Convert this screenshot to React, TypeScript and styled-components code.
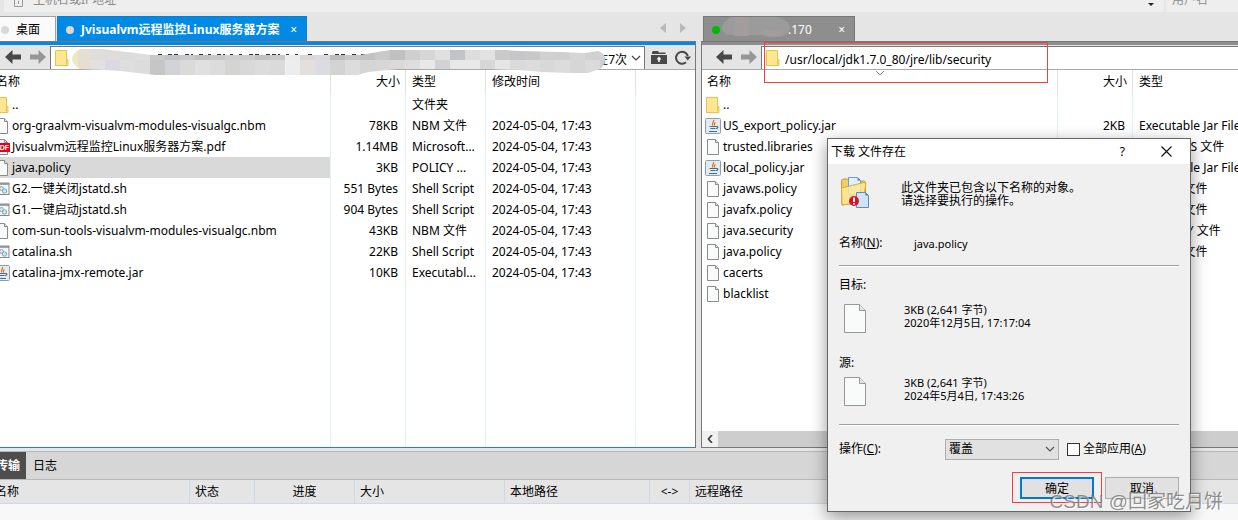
import React from 'react';
import styled, { createGlobalStyle } from 'styled-components';

const GlobalStyle = createGlobalStyle`
  *, *::before, *::after { box-sizing: border-box; }
  body {
    margin: 0;
    background: #e5e5e5;
    color: #000;
    font-family: 'Noto Sans', 'Noto Sans CJK SC', sans-serif;
    font-size: 12px;
    line-height: 18px;
    overflow: hidden;
  }
  button, input, select { font: inherit; color: inherit; }
  svg { display: block; flex: none; }
`;

const Desktop = styled.div`
  position: relative;
  height: 100vh;
  overflow: hidden;
`;

const Client = styled.div`
  display: flex;
  flex-direction: column;
  height: 100%;
  margin-left: -10px;
`;

const ConnectBar = styled.div`
  display: flex;
  height: 12px;
  padding-left: 14px;
  gap: 2px;
  overflow: hidden;
  color: #8c8c8c;
`;

const ConnectField = styled.label<{ $grow?: boolean }>`
  display: flex;
  flex: ${p => (p.$grow ? '1' : '0 0 72px')};
  min-width: 0;
  align-items: flex-end;
  gap: 10px;
  padding: 0 10px 5px ${p => (p.$grow ? '10px' : '6px')};
  background: #eee;
`;

const ConnectInput = styled.input`
  flex: 1;
  min-width: 0;
  height: 14px;
  padding: 0;
  border: 0;
  background: transparent;
  line-height: 14px;
  &::placeholder { color: #8c8c8c; opacity: 1; }
`;

const Panes = styled.main`
  display: grid;
  grid-template-columns: 706fr 537fr;
  gap: 5px;
  flex: 1;
  min-height: 0;
`;

const PaneBox = styled.section`
  display: flex;
  flex-direction: column;
  min-width: 0;
`;

const TabStrip = styled.div`
  display: flex;
  align-items: flex-end;
  gap: 1px;
  height: 29px;
  padding-left: 2px;
`;

const Tab = styled.button<{ $tone: 'idle' | 'blue' | 'gray' }>`
  display: flex;
  align-items: center;
  gap: 7px;
  height: 25px;
  padding: 2px 0 0 8px;
  border: 1px solid ${p => (p.$tone === 'blue' ? '#0b7fcf' : p.$tone === 'gray' ? '#777' : '#a0a0a0')};
  border-bottom: 0;
  background: ${p => (p.$tone === 'blue' ? '#008ae6' : p.$tone === 'gray' ? '#8e8e8e' : '#fafafa')};
  color: ${p => (p.$tone === 'idle' ? '#000' : '#fff')};
  font-weight: ${p => (p.$tone === 'blue' ? 700 : 400)};
  white-space: nowrap;
  width: ${p => (p.$tone === 'blue' ? '250px' : p.$tone === 'gray' ? '152px' : '64px')};
`;

const Dot = styled.span<{ $on?: boolean }>`
  width: 8px;
  height: 8px;
  border-radius: 50%;
  background: ${p => (p.$on ? '#00b80c' : '#d8d8d8')};
`;

const TabClose = styled.span`
  margin-left: auto;
  padding-right: 9px;
  font-weight: 400;
`;

const TabScroll = styled.div`
  display: flex;
  gap: 14px;
  margin: 0 10px 8px auto;
`;

const Frame = styled.div<{ $accent: string; $open?: boolean }>`
  display: flex;
  flex: 1;
  flex-direction: column;
  min-height: 0;
  border: 1px solid #777;
  border-right-width: ${p => (p.$open ? 0 : 1)}px;
  border-bottom-color: ${p => p.$accent};
`;

const AccentBar = styled.div<{ $accent: string }>`
  height: 3px;
  background: ${p => p.$accent};
`;

const Toolbar = styled.div`
  position: relative;
  display: flex;
  align-items: center;
  height: 25px;
  padding-left: 14px;
  border-bottom: 1px solid #aaa;
`;

const IconButton = styled.button<{ $gap?: number }>`
  padding: 0;
  margin: 0 ${p => p.$gap ?? 0}px 0 0;
  border: 0;
  background: transparent;
`;

const PathBox = styled.div<{ $open?: boolean }>`
  display: flex;
  flex: 1;
  min-width: 0;
  align-items: center;
  align-self: stretch;
  margin-top: 1px;
  padding-left: 3px;
  border: 1px solid #777;
  border-right-width: ${p => (p.$open ? 0 : 1)}px;
  border-bottom: 0;
  background: #fff;
`;

const PathInput = styled.input<{ $end?: boolean }>`
  flex: 1;
  min-width: 0;
  height: 20px;
  padding: 2px 4px 0;
  border: 0;
  outline: 0;
  background: transparent;
  text-align: ${p => (p.$end ? 'right' : 'left')};
`;

const Tools = styled.div`
  display: flex;
  gap: 8px;
  padding: 0 4px 0 6px;
`;

const Smudge = styled.svg`
  position: absolute;
  left: 79px;
  top: 3px;
`;

const TabSmudge = styled.svg`
  margin: -6px -10px 0 -6px;
`;

const Callout = styled.div`
  position: absolute;
  z-index: 1;
  left: 62px;
  top: -3px;
  width: 284px;
  height: 41px;
  border: 1px solid #fb3c3c;
  pointer-events: none;
`;

const Grip = styled.svg`
  position: absolute;
  left: 173px;
  top: 25px;
`;

const Listing = styled.div`
  display: grid;
  flex: 1;
  min-height: 0;
  background: #fff;
  overflow: hidden;
`;

const FileTable = styled.table`
  width: 100%;
  height: 100%;
  table-layout: fixed;
  border-collapse: separate;
  border-spacing: 0;
`;

const HeadCell = styled.th<{ $right?: boolean }>`
  height: 24px;
  padding: 0 5px 0 6px;
  border-right: 1px solid #e2e2e2;
  text-align: ${p => (p.$right ? 'right' : 'left')};
  font-weight: 400;
  &:first-child { padding-left: 5px; }
  &:last-child { border-right: 0; }
`;

const Cell = styled.td<{ $right?: boolean; $selected?: boolean }>`
  height: 21px;
  padding: 0 7px 0 6px;
  border-right: 1px solid #e5f0fa;
  background: ${p => (p.$selected ? '#d9d9d9' : 'transparent')};
  background-clip: padding-box;
  text-align: ${p => (p.$right ? 'right' : 'left')};
  white-space: nowrap;
  overflow: hidden;
  &:last-child { border-right: 0; }
`;

const FillCell = styled.td`
  border-right: 1px solid #e5f0fa;
  &:last-child { border-right: 0; }
`;

const FileName = styled.span`
  display: flex;
  align-items: center;
  gap: 2px;
  margin-left: -3px;
`;

const ScrollBar = styled.div`
  display: flex;
  align-items: center;
  height: 16px;
  background: #cdcdcd;
`;

const ScrollArrow = styled.button`
  display: flex;
  align-items: center;
  justify-content: center;
  width: 16px;
  height: 16px;
  padding: 0;
  border: 0;
  background: #f0f0f0;
`;

const Queue = styled.section`
  height: 69px;
  margin-top: 3px;
  border-top: 1px solid #b8b8b8;
  background: #f8f8f8;
`;

const QueueTabs = styled.div`
  display: flex;
  height: 28px;
  border-bottom: 1px solid #b8b8b8;
  background: #d6d6d6;
`;

const QueueTab = styled.button<{ $active?: boolean }>`
  width: ${p => (p.$active ? 36 : 38)}px;
  padding: 0 0 0 ${p => (p.$active ? 6 : 7)}px;
  border: 0;
  background: ${p => (p.$active ? '#4d4d4d' : 'transparent')};
  color: ${p => (p.$active ? '#fff' : '#000')};
  font-weight: ${p => (p.$active ? 700 : 400)};
  text-align: left;
  white-space: nowrap;
`;

const QueueTable = styled.table`
  width: 100%;
  table-layout: fixed;
  border-spacing: 0;
  background: #e5e5e5;
`;

const QueueHead = styled.th<{ $center?: boolean }>`
  height: 24px;
  padding: 0 5px;
  border-right: 1px solid #cfd8e6;
  border-bottom: 1px solid #cfd8e6;
  font-weight: 400;
  text-align: ${p => (p.$center ? 'center' : 'left')};
  &:last-child { border-right: 0; }
`;

const Dialog = styled.form`
  position: absolute;
  left: 827px;
  top: 138px;
  width: 364px;
  border: 1px solid #666;
  background: #f0f0f0;
  box-shadow: 0 5px 16px rgba(0, 0, 0, 0.4);
`;

const TitleBar = styled.div`
  display: flex;
  align-items: center;
  height: 25px;
  padding: 0 18px 0 3px;
  background: #fff;
`;

const Title = styled.h1`
  flex: 1;
  margin: 0;
  font-size: 12px;
  font-weight: 400;
`;

const DialogBody = styled.div`
  padding: 10px 11px 8px;
`;

const Row = styled.div<{ $height: number; $space?: number; $top?: boolean }>`
  display: flex;
  align-items: ${p => (p.$top ? 'flex-start' : 'center')};
  height: ${p => p.$height}px;
  margin-top: ${p => p.$space ?? 0}px;
`;

const Message = styled.p`
  margin: 2px 0 0 32px;
  line-height: 13px;
`;

const FieldLabel = styled.span<{ $wide?: boolean }>`
  width: ${p => (p.$wide ? '106px' : '75px')};
`;

const SmallText = styled.p<{ $indent?: boolean }>`
  margin: 0 0 0 ${p => (p.$indent ? 38 : 0)}px;
  font-size: 11px;
  line-height: 13px;
`;

const Divider = styled.hr<{ $space?: number }>`
  height: 2px;
  margin: ${p => p.$space ?? 0}px 0 0;
  border: 0;
  border-top: 1px solid #a0a0a0;
  background: #fff;
`;

const SelectWrap = styled.span`
  position: relative;
  display: flex;
`;

const Select = styled.select`
  appearance: none;
  width: 114px;
  height: 21px;
  padding: 0 3px;
  border: 1px solid #adadad;
  border-radius: 0;
  background: #e1e1e1;
  line-height: 18px;
`;

const SelectArrow = styled.svg`
  position: absolute;
  right: 4px;
  top: 7px;
  pointer-events: none;
`;

const CheckLabel = styled.label`
  display: flex;
  align-items: center;
  gap: 3px;
  margin-left: 8px;
`;

const CheckBox = styled.input`
  appearance: none;
  width: 13px;
  height: 13px;
  margin: 0;
  border: 1px solid #333;
  background: #fff;
`;

const Actions = styled.div`
  display: flex;
  align-items: center;
  justify-content: flex-end;
  gap: 3px;
`;

const Highlight = styled.span`
  display: flex;
  padding: 4px 7px 3px;
  border: 1px solid #fb3c3c;
`;

const DialogButton = styled.button<{ $primary?: boolean }>`
  width: 74px;
  height: 22px;
  padding: 2px 0 0;
  border: ${p => (p.$primary ? '2px solid #0078d7' : '1px solid #adadad')};
  background: #e1e1e1;
  line-height: 16px;
`;

const Watermark = styled.span`
  position: absolute;
  right: 15px;
  bottom: 6px;
  color: rgba(110, 110, 110, 0.75);
  font-family: 'Liberation Sans', 'Noto Sans CJK SC', sans-serif;
  font-size: 19px;
  line-height: 24px;
  text-shadow: 1px 1px 0 rgba(255, 255, 255, 0.7);
  pointer-events: none;
`;

const FolderIcon = () => (
  <svg width="16" height="18" viewBox="0 0 16 18">
    <path d="M1.500 1.500h11v9h1.500v6h-12.500z" fill="#ffe694" stroke="#e8c34c" />
    <path d="M12.500 10.500v5" stroke="#e8c34c" />
  </svg>
);

const PageIcon = () => (
  <svg width="16" height="16" viewBox="0 0 16 16">
    <path d="M2.500.5h8l3 3v12h-11z" fill="#f9fafa" stroke="#8b8b8b" />
    <path d="M10.500.5v3h3" fill="#e4e4e4" stroke="#8b8b8b" />
  </svg>
);

const JarIcon = () => (
  <svg width="16" height="16" viewBox="0 0 16 16">
    <rect x=".5" y=".5" width="15" height="15" rx="1" fill="#e3ebf1" stroke="#8aa0b0" />
    <path d="M8.500 2c1 2-2.500 3-.5 5.500M10.500 4.500c-1.500 1-1.500 1.500-.5 3" fill="none" stroke="#e8731c" strokeWidth="1.300" />
    <path d="M4.500 8.500h7M5.500 10.500h5M4 13.500h8M11.500 8.500c2 0 1.500 2-.5 2" fill="none" stroke="#3f6f94" strokeWidth="1.200" />
  </svg>
);

const ScriptIcon = () => (
  <svg width="16" height="16" viewBox="0 0 16 16">
    <rect x=".5" y="2" width="14.500" height="11.500" fill="#f5f7f8" stroke="#84898d" />
    <path d="M1 3h14" stroke="#84898d" strokeWidth="1.500" />
    <circle cx="7.500" cy="7.500" r="2" fill="#d5e6ee" stroke="#8fa9b6" />
    <circle cx="10.500" cy="10" r="2.200" fill="#cfe5f0" stroke="#7aa7bd" />
  </svg>
);

const PdfIcon = () => (
  <svg width="16" height="16" viewBox="0 0 16 16">
    <path d="M2.500.5h8l3 3v12h-11z" fill="#fafafa" stroke="#8b8b8b" />
    <path d="M10.500.5v3h3" fill="none" stroke="#8b8b8b" />
    <rect x="0" y="4" width="16" height="9" fill="#e2001a" />
    <text x="1" y="11" fill="#fff" fontFamily="Liberation Sans" fontSize="7" fontWeight="700">PDF</text>
  </svg>
);

const icons = { folder: FolderIcon, page: PageIcon, jar: JarIcon, script: ScriptIcon, pdf: PdfIcon };

const Arrow = ({ forward }: { forward?: boolean }) => (
  <svg width="16" height="14" viewBox="0 0 16 14">
    <path
      d={forward ? 'M16 7 8.500 0v4.500H0v5h8.500V14z' : 'M0 7l7.500-7v4.500H16v5H7.500V14z'}
      fill={forward ? '#969696' : '#484848'}
    />
  </svg>
);

const Chevron = ({ color = '#444' }: { color?: string }) => (
  <svg width="10" height="6" viewBox="0 0 10 6">
    <path d="M1 1l4 4 4-4" fill="none" stroke={color} strokeWidth="1.200" />
  </svg>
);

const FolderUp = () => (
  <svg width="16" height="13" viewBox="0 0 16 13">
    <path d="M2 0h5l1 1.500h6.500V3H1V1z M0 4h16v9H0z" fill="#484848" />
    <path d="M8 5.500 5.500 8.500h1.700V11h1.600V8.500h1.700z" fill="#fff" />
  </svg>
);

const Refresh = () => (
  <svg width="16" height="15" viewBox="0 0 16 15">
    <path d="M11 12.300A6 6 0 1 1 12.800 6" fill="none" stroke="#484848" strokeWidth="2" />
    <path d="M9.500 6.500H16l-3.200 4z" fill="#484848" />
  </svg>
);

const smudgeTop = ['#e6dfd0', '#e0dddd', '#e0dcdc', '#dcdcdc', '#dedede', '#c9c9c9', '#c2c3c6', '#c9c9cb', '#c0c0c0', '#c8c8c8', '#cfcfcf', '#cccccc', '#c1c1c1', '#c9c9c9', '#ececec', '#d8d6d6', '#dadadd', '#bdbdbd', '#c6c6c6', '#c2c2c2', '#c9c9c9', '#c0c0c0', '#cfcfcf', '#d6d6d6', '#e0e0e0', '#c2c3c6', '#dddddd', '#e2e2e2', '#cacaca', '#c6c6c8', '#c8c8c8', '#d0d0d0', '#cfcfcf', '#d6d6d6', '#d0d0d0', '#d2d2d2'];
const smudgeBottom = ['#e6dfd0', '#e2e0e0', '#d9d9e2', '#dedede', '#dcdcdc', '#c6c6c6', '#d2d3d7', '#dadada', '#e0e0e0', '#dcdcdc', '#d4d4d2', '#d8d8d8', '#dcdcdc', '#dadada', '#eceeed', '#e2dfdc', '#dadce2', '#d3d3d3', '#dcdcdc', '#d3d6d4', '#d6d6d6', '#dadada', '#dedede', '#e8e8e8', '#d2d2d2', '#e8e8e8', '#e8e8e8', '#d6d6d6', '#e6e6e6', '#dadada', '#dcdcdc', '#d8d8d8', '#dcdcdc', '#d6d6d6', '#dadada', '#cfcfcf'];

const PathSmudge = () => (
  <Smudge width="540" height="28" viewBox="0 0 540 28">
    <defs>
      <clipPath id="brush">
        <path d="M10 1h22l50 6h208l30-5h115l15 1 40 1 25 1 13-2q7 2 7 8-1 8-5 10l-12 4h-20l-25-1-25-2-30-1h-90l-30 3-10 3H85l-35-4-15-1-25-1Q-6 11 10 1z" />
      </clipPath>
    </defs>
    <path d="M88 6.500h6m4 0h12m5 0h8m6 0h5m4 0h3m6 0h8m5 0h3m6 0h3m7 0h12m5 0h14m6 0h3m6 0h3m10 0h4m12 0h4m7 0h12m5 0h4m5 0h5m4 0h10" stroke="#333" strokeDasharray="4 2" />
    <g clipPath="url(#brush)">
      {smudgeTop.map((c, i) => <rect key={i} x={i * 15 + 5} y="0" width="15" height="12" fill={c} />)}
      {smudgeBottom.map((c, i) => <rect key={i} x={i * 15 + 5} y="12" width="15" height="16" fill={c} />)}
      <rect width="8" height="28" fill="#f1e6c4" />
    </g>
  </Smudge>
);

type FileRow = { icon: keyof typeof icons; cells: string[]; selected?: boolean };

const stamp = '2024-05-04, 17:43';
const localFiles: FileRow[] = [
  { icon: 'folder', cells: ['..', '', '文件夹', ''] },
  { icon: 'page', cells: ['org-graalvm-visualvm-modules-visualgc.nbm', '78KB', 'NBM 文件', stamp] },
  { icon: 'pdf', cells: ['Jvisualvm远程监控Linux服务器方案.pdf', '1.14MB', 'Microsoft...', stamp] },
  { icon: 'page', cells: ['java.policy', '3KB', 'POLICY ...', stamp], selected: true },
  { icon: 'script', cells: ['G2.一键关闭jstatd.sh', '551 Bytes', 'Shell Script', stamp] },
  { icon: 'script', cells: ['G1.一键启动jstatd.sh', '904 Bytes', 'Shell Script', stamp] },
  { icon: 'page', cells: ['com-sun-tools-visualvm-modules-visualgc.nbm', '43KB', 'NBM 文件', stamp] },
  { icon: 'script', cells: ['catalina.sh', '22KB', 'Shell Script', stamp] },
  { icon: 'jar', cells: ['catalina-jmx-remote.jar', '10KB', 'Executabl...', stamp] },
];

const remoteFiles: FileRow[] = [
  { icon: 'folder', cells: ['..', '', ''] },
  { icon: 'jar', cells: ['US_export_policy.jar', '2KB', 'Executable Jar File'] },
  { icon: 'page', cells: ['trusted.libraries', '', 'LIBRARIES 文件'] },
  { icon: 'jar', cells: ['local_policy.jar', '2KB', 'Executable Jar File'] },
  { icon: 'page', cells: ['javaws.policy', '', 'POLICY 文件'] },
  { icon: 'page', cells: ['javafx.policy', '', 'POLICY 文件'] },
  { icon: 'page', cells: ['java.security', '', 'SECURITY 文件'] },
  { icon: 'page', cells: ['java.policy', '3KB', 'POLICY 文件'] },
  { icon: 'page', cells: ['cacerts', '', ''] },
  { icon: 'page', cells: ['blacklist', '', ''] },
];

const Files = ({ heads, widths, rows }: { heads: string[]; widths: (number | undefined)[]; rows: FileRow[] }) => (
  <Listing>
    <FileTable>
      <colgroup>{widths.map((w, i) => <col key={i} width={w} />)}</colgroup>
      <thead>
        <tr>{heads.map((h, i) => <HeadCell key={i} $right={i === 1}>{h}</HeadCell>)}</tr>
      </thead>
      <tbody>
        {rows.map(row => {
          const Icon = icons[row.icon];
          return (
            <tr key={row.cells[0]}>
              {heads.map((_, i) => (
                <Cell key={i} $right={i === 1} $selected={row.selected && i === 0}>
                  {i === 0 ? <FileName><Icon />{row.cells[0]}</FileName> : row.cells[i]}
                </Cell>
              ))}
            </tr>
          );
        })}
        <tr>{heads.map((_, i) => <FillCell key={i} />)}</tr>
      </tbody>
    </FileTable>
  </Listing>
);

const NavButtons = () => (
  <>
    <IconButton type="button" aria-label="后退" $gap={9}><Arrow /></IconButton>
    <IconButton type="button" aria-label="前进" $gap={4}><Arrow forward /></IconButton>
  </>
);

const LocalPane = () => (
  <PaneBox>
    <TabStrip>
      <Tab type="button" $tone="idle"><Dot />桌面</Tab>
      <Tab type="button" $tone="blue"><Dot />Jvisualvm远程监控Linux服务器方案<TabClose>×</TabClose></Tab>
      <TabScroll>
        <svg width="6" height="10"><path d="M6 0v10L0 5z" fill="#b9b9b9" /></svg>
        <svg width="6" height="10"><path d="M0 0v10l6-5z" fill="#b9b9b9" /></svg>
      </TabScroll>
    </TabStrip>
    <Frame $accent="#1a86d9">
      <AccentBar $accent="#008ae6" />
      <Toolbar>
        <NavButtons />
        <PathBox>
          <FolderIcon />
          <PathInput $end aria-label="本地路径" defaultValue="在7次" />
          <IconButton type="button" aria-label="展开" $gap={3}><Chevron /></IconButton>
        </PathBox>
        <Tools>
          <IconButton type="button" aria-label="上级"><FolderUp /></IconButton>
          <IconButton type="button" aria-label="刷新"><Refresh /></IconButton>
        </Tools>
        <PathSmudge />
      </Toolbar>
      <Files heads={['名称', '大小', '类型', '修改时间', '']} widths={[undefined, 75, 80, 150, 59]} rows={localFiles} />
    </Frame>
  </PaneBox>
);

const RemotePane = () => (
  <PaneBox>
    <TabStrip>
      <Tab type="button" $tone="gray">
        <Dot $on />
        <TabSmudge width="70" height="21" viewBox="0 0 70 21">
          <path d="M10 0h46q14 4 13 12-4 10-20 8l-8-2H6Q-6 10 10 0z" fill="#9b9b9b" />
          <path d="M13 0h15v19H13zM43 13h20q-6 9-20 6z" fill="#a39c9c" />
        </TabSmudge>
        .170
        <TabClose>×</TabClose>
      </Tab>
    </TabStrip>
    <Frame $accent="#777" $open>
      <AccentBar $accent="#8e8e8e" />
      <Toolbar>
        <NavButtons />
        <PathBox $open>
          <FolderIcon />
          <PathInput aria-label="远程路径" defaultValue="/usr/local/jdk1.7.0_80/jre/lib/security" />
        </PathBox>
        <Callout />
        <Grip width="10" height="6" viewBox="0 0 10 6"><path d="M1 1l4 4 4-4" fill="none" stroke="#888" /></Grip>
      </Toolbar>
      <Files heads={['名称', '大小', '类型']} widths={[356, 75, undefined]} rows={remoteFiles} />
      <ScrollBar>
        <ScrollArrow type="button" aria-label="向左">
          <svg width="6" height="8" viewBox="0 0 6 8"><path d="M5 0 1.500 4 5 8" fill="none" stroke="#444" strokeWidth="1.800" /></svg>
        </ScrollArrow>
      </ScrollBar>
    </Frame>
  </PaneBox>
);

const PageSlot = styled.span`
  padding: 1px 0 0 5px;
`;

const LargePage = () => (
  <PageSlot>
    <svg width="22" height="29" viewBox="0 0 22 29">
      <path d="M.5.500h15l6 6v22H.500z" fill="#f9fafa" stroke="#979797" />
      <path d="M15.500.5v6h6" fill="#e6e6e6" stroke="#979797" />
    </svg>
  </PageSlot>
);

const ConflictIcon = () => (
  <svg width="30" height="32" viewBox="-1 0 30 32">
    <path d="M1.500 4q0-2 2-2h4l2 2h14q2 0 2 2v18L2 28z" fill="#f2cf62" stroke="#c99a2a" />
    <path d="M8.500.5h9l3 3v14h-12z" fill="#e2effc" stroke="#6f9dcb" />
    <path d="M17.500.5v3h3z" fill="#3e78be" />
    <path d="M1.500 11 24 5.500l2 .5-3 19L2 28z" fill="#fbe795" fillOpacity=".85" stroke="#d8ab3c" />
    <path d="M16.500 15.500h9l3 3v12h-12z" fill="#cfe3fa" stroke="#6289b8" />
    <path d="M25.500 15.500v3h3z" fill="#3e78be" />
    <circle cx="14" cy="24" r="5" fill="#d8142c" />
    <path d="M14 20.500v4.500M14 26v1.500" stroke="#fff" strokeWidth="2" />
  </svg>
);

const OverwriteDialog = () => (
  <Dialog onSubmit={e => e.preventDefault()}>
    <TitleBar>
      <Title>下载 文件存在</Title>
      <IconButton type="button" $gap={36}>?</IconButton>
      <IconButton type="button" aria-label="关闭">
        <svg width="11" height="11" viewBox="0 0 11 11"><path d="M.5.500l10 10M10.500.500l-10 10" stroke="#111" strokeWidth="1.200" /></svg>
      </IconButton>
    </TitleBar>
    <DialogBody>
      <Row $height={38}><ConflictIcon /><Message>此文件夹已包含以下名称的对象。<br />请选择要执行的操作。</Message></Row>
      <Row $height={44} $space={9}><FieldLabel>名称(<u>N</u>):</FieldLabel><SmallText>java.policy</SmallText></Row>
      <Divider />
      <Row $height={36}>目标:</Row>
      <Row $height={30} $top><LargePage /><SmallText $indent>3KB (2,641 字节)<br />2020年12月5日, 17:17:04</SmallText></Row>
      <Row $height={26} $space={17}>源:</Row>
      <Row $height={30} $top><LargePage /><SmallText $indent>3KB (2,641 字节)<br />2024年5月4日, 17:43:26</SmallText></Row>
      <Divider $space={18} />
      <Row $height={46}>
        <FieldLabel as="label" htmlFor="action" $wide>操作(<u>C</u>):</FieldLabel>
        <SelectWrap>
          <Select id="action" defaultValue="overwrite"><option value="overwrite">覆盖</option></Select>
          <SelectArrow width="10" height="6" viewBox="0 0 10 6"><path d="M1 1l4 4 4-4" fill="none" stroke="#555" strokeWidth="1.200" /></SelectArrow>
        </SelectWrap>
        <CheckLabel><CheckBox type="checkbox" /><span>全部应用(<u>A</u>)</span></CheckLabel>
      </Row>
      <Actions>
        <Highlight><DialogButton type="submit" $primary>确定</DialogButton></Highlight>
        <DialogButton type="button">取消</DialogButton>
      </Actions>
    </DialogBody>
  </Dialog>
);

export default function App() {
  return (
    <Desktop>
      <GlobalStyle />
      <Client>
        <ConnectBar>
          <ConnectField $grow>
            <svg width="9" height="11" viewBox="0 0 9 11"><path d="M.5.500h8v10h-8zM4.500 5v3" fill="none" stroke="#999" /></svg>
            <ConnectInput placeholder="主机名或IP地址" />
            <svg width="6" height="4" viewBox="0 0 6 4"><path d="M0 0h6L3 3z" fill="#222" /></svg>
          </ConnectField>
          <ConnectField><ConnectInput placeholder="用户名" /></ConnectField>
        </ConnectBar>
        <Panes>
          <LocalPane />
          <RemotePane />
        </Panes>
        <Queue>
          <QueueTabs>
            <QueueTab type="button" $active>传输</QueueTab>
            <QueueTab type="button">日志</QueueTab>
          </QueueTabs>
          <QueueTable>
            <colgroup>
              <col width="200" /><col width="65" /><col width="100" /><col width="150" /><col width="145" /><col width="40" /><col />
            </colgroup>
            <thead>
              <tr>
                <QueueHead>名称</QueueHead>
                <QueueHead>状态</QueueHead>
                <QueueHead $center>进度</QueueHead>
                <QueueHead>大小</QueueHead>
                <QueueHead>本地路径</QueueHead>
                <QueueHead $center>&lt;-&gt;</QueueHead>
                <QueueHead>远程路径</QueueHead>
              </tr>
            </thead>
          </QueueTable>
        </Queue>
      </Client>
      <OverwriteDialog />
      <Watermark>CSDN @回家吃月饼</Watermark>
    </Desktop>
  );
}
